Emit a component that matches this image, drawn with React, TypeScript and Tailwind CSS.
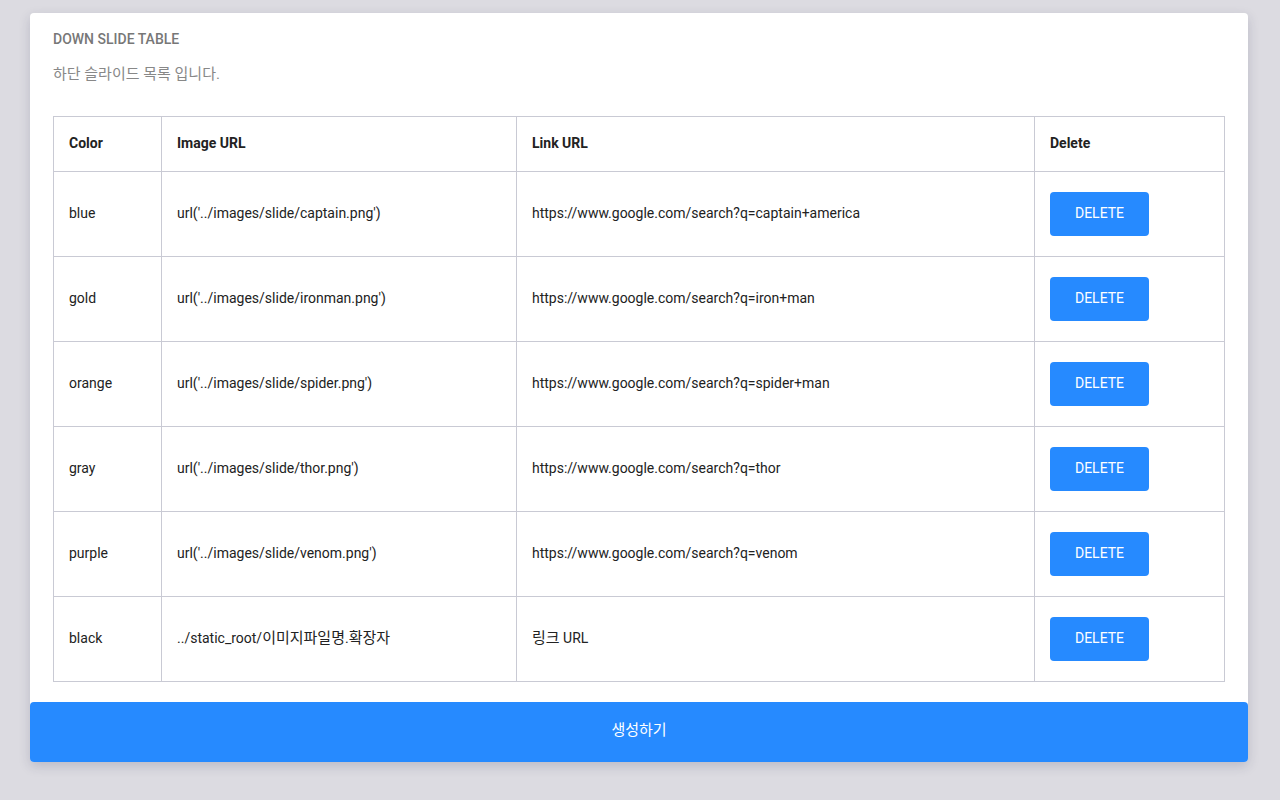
import React from "react";

type Slide = { color: string; image: React.ReactNode; link: React.ReactNode };

// 한글은 참고 화면에서 조금 더 넓게 렌더링됨
const Ko = ({ children }: { children: React.ReactNode }) => (
  <span className="text-[15px]">{children}</span>
);

const slides: Slide[] = [
  { color: "blue", image: "url('../images/slide/captain.png')", link: "https://www.google.com/search?q=captain+america" },
  { color: "gold", image: "url('../images/slide/ironman.png')", link: "https://www.google.com/search?q=iron+man" },
  { color: "orange", image: "url('../images/slide/spider.png')", link: "https://www.google.com/search?q=spider+man" },
  { color: "gray", image: "url('../images/slide/thor.png')", link: "https://www.google.com/search?q=thor" },
  { color: "purple", image: "url('../images/slide/venom.png')", link: "https://www.google.com/search?q=venom" },
  {
    color: "black",
    image: (
      <>
        ../static_root/<Ko>이미지파일명</Ko>.<Ko>확장자</Ko>
      </>
    ),
    link: (
      <>
        <Ko>링크</Ko> URL
      </>
    ),
  },
];

export default function App() {
  return (
    <div
      className="min-h-screen bg-[#dcdbe1] px-[30px] pt-[13px] text-[#222]"
      style={{ fontFamily: "Roboto, 'Noto Sans CJK KR', sans-serif" }}
    >
      {/* 카드 */}
      <div className="w-[1218px] rounded-[4px] bg-white shadow-[0_4px_12px_rgba(40,40,80,0.18)]">
        <div className="px-[23px] pt-[16px] pb-[21px]">
          <h2 className="text-[14px] font-medium leading-[20px] text-[#777]">DOWN SLIDE TABLE</h2>
          <p className="mt-[15px] text-[15px] leading-[20px] text-[#888]">하단 슬라이드 목록 입니다.</p>

          <table className="mt-[32px] w-[1172px] table-fixed border-collapse text-[14px]">
            <colgroup>
              <col className="w-[108px]" />
              <col className="w-[355px]" />
              <col className="w-[518px]" />
              <col className="w-[190px]" />
            </colgroup>
            <thead>
              <tr className="h-[55px]">
                {["Color", "Image URL", "Link URL", "Delete"].map((h) => (
                  <th key={h} className="border border-[#c9cad4] pb-[1px] pl-[15px] text-left font-bold">
                    {h}
                  </th>
                ))}
              </tr>
            </thead>
            <tbody>
              {slides.map((s) => (
                <tr key={s.color} className="h-[85px]">
                  <td className="border border-[#c9cad4] pb-[1px] pl-[15px]">{s.color}</td>
                  <td className="border border-[#c9cad4] pb-[1px] pl-[15px]">{s.image}</td>
                  <td className="border border-[#c9cad4] pb-[1px] pl-[15px]">{s.link}</td>
                  <td className="border border-[#c9cad4] pl-[15px]">
                    <button className="flex h-[44px] w-[99px] items-center justify-center rounded-[4px] bg-[#268aff] pb-[1px] text-[14px] font-normal text-white">
                      DELETE
                    </button>
                  </td>
                </tr>
              ))}
            </tbody>
          </table>
        </div>

        {/* 생성 버튼 */}
        <button className="-mt-[1px] flex h-[60px] w-full items-center justify-center rounded-[4px] bg-[#268aff] pb-[4px] text-[15px] text-white">
          생성하기
        </button>
      </div>
    </div>
  );
}
